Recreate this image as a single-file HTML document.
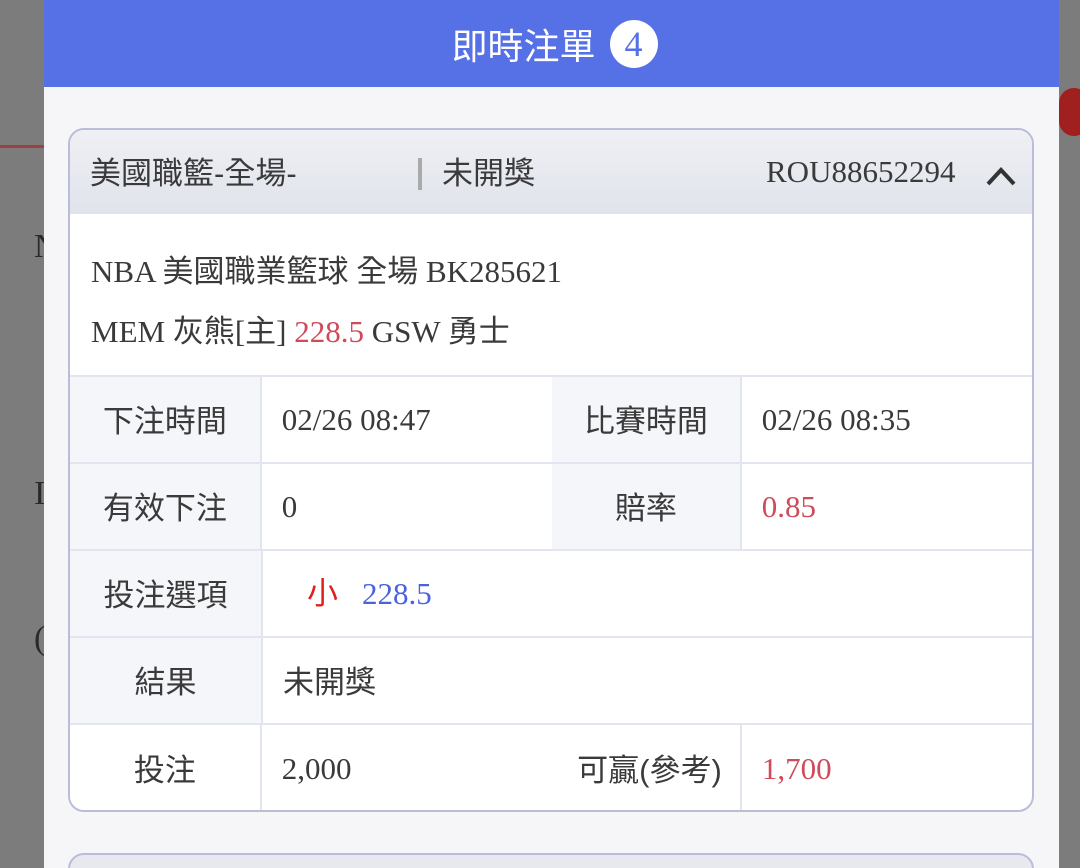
<!DOCTYPE html>
<html><head><meta charset="utf-8"><style>
html{overflow:hidden;height:868px}
body{margin:0;width:1080px;height:868px;overflow:hidden;background:#7c7c7c;position:relative;font-family:"Liberation Serif","Noto Sans CJK TC",serif;color:#3a3a3a}
.bgtxt{position:absolute;color:#2a2a2a;font-size:34px}
.modal{position:absolute;left:44px;top:0;width:1015px;height:868px;background:#f6f6f8;overflow:hidden}
.hd{height:87px;background:#5670e6;color:#fff;font-family:"Liberation Sans","Noto Sans CJK TC",sans-serif;font-size:36px;display:flex;align-items:center;justify-content:center;padding-left:6px;box-sizing:border-box}
.badge{width:48px;height:48px;border-radius:50%;background:#fff;color:#5670e6;font-family:"Liberation Serif",serif;font-size:36px;display:flex;align-items:center;justify-content:center;margin-left:14px}
.card{position:absolute;left:24px;top:128px;width:966px;height:684px;border:2px solid #b9bdd8;border-radius:16px;background:#fff;overflow:hidden;box-sizing:border-box}
.ch{height:84px;background:linear-gradient(#eef0f4,#e1e3ec);position:relative;font-size:31px;font-family:"Liberation Sans","Noto Sans CJK TC",sans-serif}
.ch span{position:absolute;top:27px;line-height:1.1}
.info{height:163px;border-bottom:2px solid #e2e4ef;box-sizing:border-box;padding-left:21px;font-size:31px}
.row{height:87px;border-bottom:2px solid #e2e4ef;box-sizing:border-box;display:flex;font-size:31px;line-height:1}
.row:last-child{border-bottom:none}
.l{width:193px;background:#f5f6fa;border-right:2px solid #e2e4ef;box-sizing:border-box;display:flex;align-items:center;justify-content:center;font-family:"Liberation Sans","Noto Sans CJK TC",sans-serif;font-size:31px;padding-top:3px}
.v{width:292px;display:flex;align-items:center;padding-left:20px;box-sizing:border-box;padding-top:0px}
.l2{width:191px;background:#f5f6fa;border-right:2px solid #e2e4ef;box-sizing:border-box;display:flex;align-items:center;justify-content:center;font-family:"Liberation Sans","Noto Sans CJK TC",sans-serif;padding-top:3px}
.red{color:#d04a5a}
</style></head><body>
<div class="bgtxt" style="left:34px;top:228px">N</div>
<div class="bgtxt" style="left:34px;top:475px">I</div>
<div class="bgtxt" style="left:34px;top:620px">(</div>
<div style="position:absolute;left:0;top:145px;width:44px;height:3px;background:#a04040"></div>
<div style="position:absolute;left:1059px;top:88px;width:30px;height:48px;border-radius:24px;background:#a02020"></div>
<div class="modal">
<div class="hd">即時注單<div class="badge">4</div></div>
<div class="card">
<div class="ch"><span style="left:20px">美國職籃-全場-</span><span style="left:348px;top:28px;width:4px;height:32px;background:#aaa"></span><span style="left:372px">未開獎</span><span style="left:696px;font-family:'Liberation Serif',serif;top:25px;font-size:31px">ROU88652294</span><svg style="position:absolute;left:916px;top:36px" width="30" height="20"><path d="M2 18 L15 4 L28 18" fill="none" stroke="#333" stroke-width="4"/></svg></div>
<div class="info"><div style="padding-top:32px;height:60px">NBA 美國職業籃球 全場 BK285621</div><div>MEM 灰熊[主] <span class="red">228.5</span> GSW 勇士</div></div>
<div class="row"><div class="l">下注時間</div><div class="v">02/26 08:47</div><div class="l2">比賽時間</div><div class="v">02/26 08:35</div></div>
<div class="row"><div class="l">有效下注</div><div class="v">0</div><div class="l2">賠率</div><div class="v red">0.85</div></div>
<div class="row"><div class="l">投注選項</div><div class="v" style="width:700px;padding-left:44px"><span style="color:#e0201c;font-family:'Liberation Sans','Noto Sans CJK TC',sans-serif">小</span><span style="color:#4a62e0;margin-left:24px">228.5</span></div></div>
<div class="row"><div class="l">結果</div><div class="v" style="font-family:'Liberation Sans','Noto Sans CJK TC',sans-serif;padding-top:3px">未開獎</div></div>
<div class="row"><div class="l" style="background:#fff">投注</div><div class="v">2,000</div><div class="l2" style="background:#fff;justify-content:flex-end;padding-right:18px">可贏(參考)</div><div class="v red">1,700</div></div>
</div>
<div style="position:absolute;left:24px;top:853px;width:966px;height:40px;border:2px solid #b9bdd8;border-radius:16px;background:#e8e9ef;box-sizing:border-box"></div>
</div>
</body></html>
